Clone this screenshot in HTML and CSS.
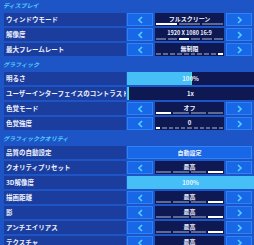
FILE: index.html
```html
<!DOCTYPE html>
<html lang="ja">
<head>
    <meta charset="UTF-8">
    <title>ビデオ設定</title>
    <link rel="stylesheet" href="styles.css">
</head>
<body>

<div class="menu">

    <div class="section">
        <div class="heading">ディスプレイ</div>
        <div class="row">
            <div class="label">ウィンドウモード</div>
            <div class="picker">
                <div class="arrow"><svg width="5" height="8" viewBox="0 0 5 8"><path d="M4 1 L1 4 L4 7"/></svg></div>
                <div class="value"><span>フルスクリーン</span><div class="segs"><i class="on"></i><i></i><i></i></div></div>
                <div class="arrow"><svg width="5" height="8" viewBox="0 0 5 8"><path d="M1 1 L4 4 L1 7"/></svg></div>
            </div>
        </div>
        <div class="row">
            <div class="label">解像度</div>
            <div class="picker">
                <div class="arrow"><svg width="5" height="8" viewBox="0 0 5 8"><path d="M4 1 L1 4 L4 7"/></svg></div>
                <div class="value"><span class="num">1920 X 1080 16:9</span><div class="segs"><i></i><i></i><i class="on"></i><i></i><i></i><i></i></div></div>
                <div class="arrow"><svg width="5" height="8" viewBox="0 0 5 8"><path d="M1 1 L4 4 L1 7"/></svg></div>
            </div>
        </div>
        <div class="row">
            <div class="label">最大フレームレート</div>
            <div class="picker">
                <div class="arrow"><svg width="5" height="8" viewBox="0 0 5 8"><path d="M4 1 L1 4 L4 7"/></svg></div>
                <div class="value"><span>無制限</span><div class="segs"><i></i><i></i><i></i><i></i><i></i><i></i><i></i><i></i><i></i><i class="on"></i></div></div>
                <div class="arrow"><svg width="5" height="8" viewBox="0 0 5 8"><path d="M1 1 L4 4 L1 7"/></svg></div>
            </div>
        </div>
    </div>

    <div class="section">
        <div class="heading">グラフィック</div>
        <div class="row">
            <div class="label">明るさ</div>
            <div class="slider"><div class="fill" style="width: 50%"></div><span>100%</span></div>
        </div>
        <div class="row">
            <div class="label">ユーザーインターフェイスのコントラスト</div>
            <div class="slider"><div class="fill" style="width: 1px"></div><span>1x</span></div>
        </div>
        <div class="row">
            <div class="label">色覚モード</div>
            <div class="picker">
                <div class="arrow"><svg width="5" height="8" viewBox="0 0 5 8"><path d="M4 1 L1 4 L4 7"/></svg></div>
                <div class="value"><span>オフ</span><div class="segs"><i class="on"></i><i></i><i></i><i></i></div></div>
                <div class="arrow"><svg width="5" height="8" viewBox="0 0 5 8"><path d="M1 1 L4 4 L1 7"/></svg></div>
            </div>
        </div>
        <div class="row">
            <div class="label">色覚強度</div>
            <div class="picker">
                <div class="arrow"><svg width="5" height="8" viewBox="0 0 5 8"><path d="M4 1 L1 4 L4 7"/></svg></div>
                <div class="value"><span>0</span><div class="segs"><i class="on"></i><i></i><i></i><i></i><i></i><i></i><i></i><i></i><i></i><i></i><i></i></div></div>
                <div class="arrow"><svg width="5" height="8" viewBox="0 0 5 8"><path d="M1 1 L4 4 L1 7"/></svg></div>
            </div>
        </div>
    </div>

    <div class="section">
        <div class="heading">グラフィッククオリティ</div>
        <div class="row">
            <div class="label">品質の自動設定</div>
            <div class="button">自動設定</div>
        </div>
        <div class="row">
            <div class="label">クオリティプリセット</div>
            <div class="picker">
                <div class="arrow"><svg width="5" height="8" viewBox="0 0 5 8"><path d="M4 1 L1 4 L4 7"/></svg></div>
                <div class="value"><span>最高</span><div class="segs"><i></i><i></i><i></i><i class="on"></i></div></div>
                <div class="arrow"><svg width="5" height="8" viewBox="0 0 5 8"><path d="M1 1 L4 4 L1 7"/></svg></div>
            </div>
        </div>
        <div class="row">
            <div class="label">3D解像度</div>
            <div class="slider"><div class="fill full" style="width: 100%"></div><span>100%</span></div>
        </div>
        <div class="row">
            <div class="label">描画距離</div>
            <div class="picker">
                <div class="arrow"><svg width="5" height="8" viewBox="0 0 5 8"><path d="M4 1 L1 4 L4 7"/></svg></div>
                <div class="value"><span>最高</span><div class="segs"><i></i><i></i><i></i><i class="on"></i></div></div>
                <div class="arrow"><svg width="5" height="8" viewBox="0 0 5 8"><path d="M1 1 L4 4 L1 7"/></svg></div>
            </div>
        </div>
        <div class="row">
            <div class="label">影</div>
            <div class="picker">
                <div class="arrow"><svg width="5" height="8" viewBox="0 0 5 8"><path d="M4 1 L1 4 L4 7"/></svg></div>
                <div class="value"><span>最高</span><div class="segs"><i></i><i></i><i></i><i class="on"></i></div></div>
                <div class="arrow"><svg width="5" height="8" viewBox="0 0 5 8"><path d="M1 1 L4 4 L1 7"/></svg></div>
            </div>
        </div>
        <div class="row">
            <div class="label">アンチエイリアス</div>
            <div class="picker">
                <div class="arrow"><svg width="5" height="8" viewBox="0 0 5 8"><path d="M4 1 L1 4 L4 7"/></svg></div>
                <div class="value"><span>最高</span><div class="segs"><i></i><i></i><i></i><i class="on"></i></div></div>
                <div class="arrow"><svg width="5" height="8" viewBox="0 0 5 8"><path d="M1 1 L4 4 L1 7"/></svg></div>
            </div>
        </div>
        <div class="row">
            <div class="label">テクスチャ</div>
            <div class="picker">
                <div class="arrow"><svg width="5" height="8" viewBox="0 0 5 8"><path d="M4 1 L1 4 L4 7"/></svg></div>
                <div class="value"><span>最高</span><div class="segs"><i></i><i></i><i></i><i class="on"></i></div></div>
                <div class="arrow"><svg width="5" height="8" viewBox="0 0 5 8"><path d="M1 1 L4 4 L1 7"/></svg></div>
            </div>
        </div>
    </div>

</div>

</body>
</html>
```

FILE: styles.css
```css
body {
    margin: 0;
    background-color: #1d55c6;
    font-family: "Noto Sans CJK JP", "Noto Sans", sans-serif;
    font-weight: 700;
    color: #eef2ff;
}
.menu {
    width: 254px;
    height: 245px;
    overflow: hidden;
    padding: 0 2px 0 4px;
    box-sizing: border-box;
}
.section + .section {
    margin-top: 3px;
}
.heading {
    height: 13px;
    line-height: 11px;
    margin-left: -1px;
    font-size: 6px;
    font-style: italic;
    color: #55cdff;
}
.row {
    display: grid;
    grid-template-columns: 1fr 125px;
    column-gap: 1px;
    height: 13px;
    margin-bottom: 2px;
}
.label {
    background-color: #1b3d9d;
    padding-left: 2px;
    font-size: 6.5px;
    line-height: 13px;
    white-space: nowrap;
    overflow: hidden;
}
.picker {
    display: grid;
    grid-template-columns: 26px 1fr 26px;
    gap: 2px;
}
.arrow {
    display: flex;
    align-items: center;
    justify-content: center;
    background-color: #1767e6;
    border: 1px solid #2c82f6;
}
.arrow path {
    fill: none;
    stroke: #55ccff;
    stroke-width: 1.6;
}
.value {
    display: flex;
    flex-direction: column;
    align-items: center;
    padding: 1px 1px 1px;
    background-color: #0e1852;
    box-sizing: border-box;
}
.value span {
    font-size: 6px;
    line-height: 9px;
}
.value .num {
    font-size: 5.5px;
}
.segs {
    display: flex;
    gap: 2px;
    width: 100%;
    margin-top: auto;
}
.segs i {
    flex: 1;
    height: 2px;
    background-color: #5f6a92;
}
.segs i.on {
    background-color: #ffffff;
}
.slider {
    position: relative;
    margin-right: -2px;
    background-color: #0e1852;
    font-size: 6px;
    line-height: 13px;
    text-align: center;
}
.slider .fill {
    position: absolute;
    top: 0;
    left: 0;
    bottom: 0;
    background-color: #45bff5;
    box-shadow: 1px 0 0 #3fe3b5;
}
.slider .fill.full {
    box-shadow: none;
}
.slider span {
    position: relative;
}
.button {
    background-color: #1767e6;
    border: 1px solid #2c82f6;
    font-size: 6px;
    line-height: 11px;
    text-align: center;
}
```
